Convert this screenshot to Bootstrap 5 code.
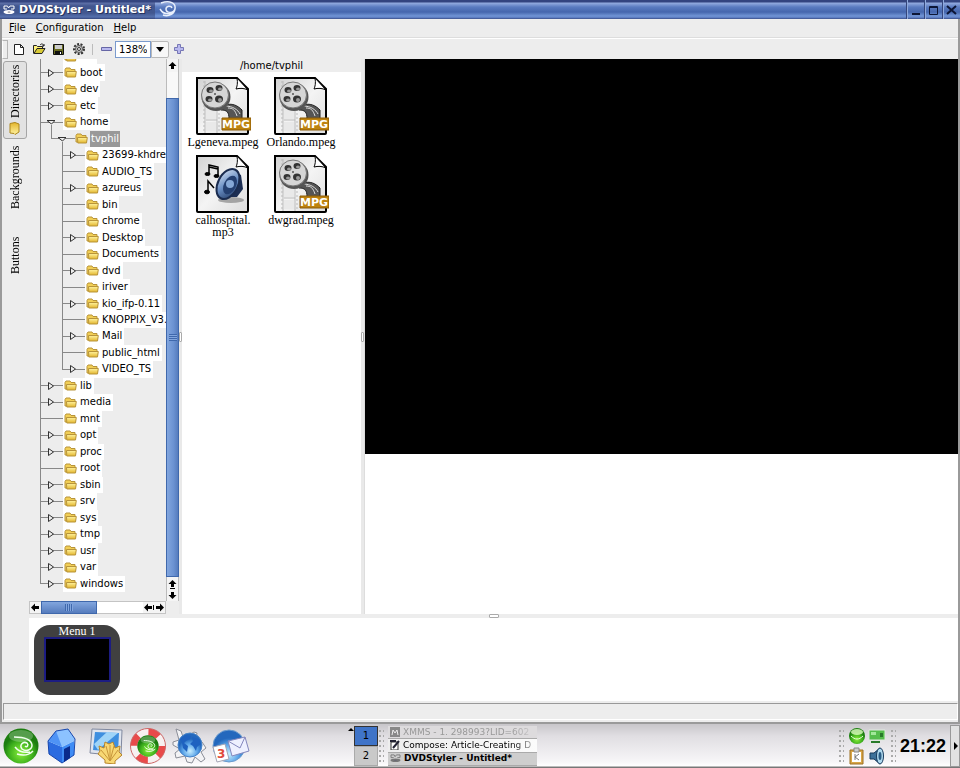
<!DOCTYPE html>
<html lang="en">
<head>
<meta charset="utf-8">
<meta name="viewport" content="width=device-width, initial-scale=1">
<title>DVDStyler - Untitled*</title>
<link href="https://cdn.jsdelivr.net/npm/bootstrap@5.3.0/dist/css/bootstrap.min.css" rel="stylesheet">
<style>
:root{--face:#ededed;--ui:"DejaVu Sans",Verdana,sans-serif;--book:"Liberation Serif","Times New Roman",serif}
body{font:10px/16px var(--ui);color:#000;background:var(--face)}
button,input{font:inherit;color:inherit}
button{background:none;border:0;padding:0;border-radius:0}
svg{display:block;flex:none}
.serif{font-family:var(--book);font-size:12px;line-height:12px}
.titlebar{height:19px;background:linear-gradient(#33447f 0,#33447f 2px,#93abdf 3px,#5a7bc0 7px,#4566ad 12px,#7195d6 16px,#5876bb 18px,#34467c 19px);color:#fff;font-size:11px;font-weight:700}
.title-text{width:155px;padding-left:3px;background:linear-gradient(#33447f 0,#33447f 2px,#5f71a8 3px,#42568f 6px,#41578f 13px,#5571ad 17px,#34467c 19px);text-shadow:1px 1px #25315c}
.win-btn{width:18px;height:19px;border-left:1px solid #34467c;box-shadow:inset 1px 0 #8ea9dd}
.frame{border:solid #9a9a9a;border-width:0 2px 2px}
.menus{height:19px;padding:1px 7px;gap:10px;border-bottom:1px solid #ddd}
.menus a{color:#000;text-decoration:none}
.tools{height:21px;padding-right:8px;border-top:1px solid #fff}
.tools button{width:20px;height:18px}
.grip{width:6px;height:19px;border:1px solid #b5b5b5;border-left-color:#fff;margin-right:2px}
.sep{width:1px;height:11px;background:#bcbcbc;margin:0 6px 0 2px}
.tools .zoom-out{width:16px}
.zoom-in{width:36px;height:17px;border:1px solid #7b9bcd;background:#fff;padding:0 3px}
.tools .zoom-drop{width:18px;height:17px;border:1px solid #b9b9b9;background:#f7f7f7;border-radius:0 2px 2px 0}
.side{width:27px;padding:2px 2px 0 1px}
.side button{width:24px;gap:4px}
.side .vert{writing-mode:vertical-rl;transform:rotate(180deg)}
.side .on{height:78px;border:1px solid #a5a5a5;border-radius:3px;background:#e2e2e2}
.side .backs{height:76px}.side .btns{height:80px}
.browser{width:150px}
.tree{overflow:hidden;padding:0 0 9px 11px}
.tree-list{margin-top:-11px}
.tree-row{flex:1 1 0;min-height:0;white-space:nowrap;line-height:16px}
.pipe,.branch{align-self:stretch;flex:none;background:linear-gradient(#888,#888) 0 0/1px 100% no-repeat}
.pipe{width:22px}.pipe.short{width:11px}
.branch{width:24px;background:linear-gradient(#888,#888) 0 0/1px 100% no-repeat,linear-gradient(#888,#888) 0 50%/100% 1px no-repeat;padding-left:7px}
.branch.last{background-size:1px 50%,100% 1px}
.node{background:#fff;padding:0 2px 0 1px;gap:3px;margin-left:-1px;align-self:stretch}
.node.sel{background:none;padding-right:0}
.node.sel span{background:#999;color:#fff;padding:0 1px;margin-left:-1px}
.vbar{width:13px;background:#f8f8f8;border:solid #bbb;border-width:0 1px}
.vbar button,.hbar button{background:#f4f4f4;flex:none}
.vthumb{background:linear-gradient(90deg,#82a6de,#6b92d2 60%,#567cbd);border:1px solid #3f68ac;margin:0 -1px}
.vgap{height:26px}
.hbar{height:13px;margin-right:13px;background:#fff;border:1px solid #c4c4c4}
.hthumb{width:56px;background:linear-gradient(#82a6de,#567cbd);border:1px solid #3f68ac;margin:-1px 0}
.hgrip,.vgrip{background:repeating-linear-gradient(90deg,#3f68ac 0 1px,#82a6de 1px 2px);width:8px;height:7px}
.vgrip{background:repeating-linear-gradient(#3f68ac 0 1px,#82a6de 1px 2px)}
.vsplit{width:3px;background:#e9e9e9}
.vsplit i{width:3px;height:10px;border:1px solid #aaa;background:#fff;border-radius:1px}
.hsplit{height:4px}
.hsplit i{width:10px;height:4px;border:1px solid #aaa;background:#fff;border-radius:1px}
.files{width:179px}
.path-head{height:13px;line-height:13px;background:var(--face)}
.thumbs{display:grid;grid-template-columns:78px 78px;grid-auto-rows:78px;padding:4px 2px}
.preview{border-left:1px solid #ddd}
.screen{aspect-ratio:3/2;background:#000}
.strip{height:83px;padding:7px 5px}
.menu-card{width:86px;height:70px;border-radius:16px;background:#404040;color:#fff}
.menu-screen{width:67px;height:45px;background:#000;border:2px solid #1c1c82}
.status{height:17px;margin:2px 0 2px 1px;border:1px solid;border-color:#999 #fff #fff #999}
.taskbar{height:44px;background:linear-gradient(#c8c6ca 0,#e0dee2 12px,#f7f6f8 38px,#fff 42px,#777 43px)}
.launch{gap:5px;padding-left:3px;width:348px}
.handle{width:6px;height:34px;background:radial-gradient(circle at 2px 2px,#aaa 1px,transparent 1px) 0 0/4px 5px}
.pager{width:24px;height:40px}
.pager button{flex:1;background:#c9c9c9;border:1px solid #aaa}
.pager .on{background:#3f74c8;border-color:#333}
.tasks{width:149px;height:40px;font-size:9px}
.tasks button{flex:1;line-height:13px;text-align:left;overflow:hidden;white-space:nowrap;background:linear-gradient(90deg,#eeeeee,#fbfbfb);border-bottom:1px solid #aaa;gap:3px;padding-left:2px}
.tasks .on{background:#cecece;font-weight:700}
.tasks .dim{color:#999;background:#dddbdd}
.fade-end{-webkit-mask-image:linear-gradient(90deg,#000 85%,#0005)}
.tray{display:grid;grid-template-columns:18px 18px;gap:2px}
.clock{font:700 18px/40px "Liberation Sans Narrow","Liberation Sans",Arial,sans-serif;width:50px}
.hide-btn{width:10px;height:42px;background:#e2e2e2;border:1px solid #999}
</style>
<script src="https://cdn.jsdelivr.net/npm/bootstrap@5.3.0/dist/js/bootstrap.bundle.min.js"></script>
</head>
<body class="vh-100 overflow-hidden d-flex flex-column">
<svg width="0" height="0" class="position-absolute" aria-hidden="true">
<defs>
<linearGradient id="gold" x2="0" y2="1"><stop stop-color="#fff3a0"/><stop offset="1" stop-color="#e3b52c"/></linearGradient>
<linearGradient id="page" x1="0" x2="1" y2="1"><stop stop-color="#d2d2d2"/><stop offset=".5" stop-color="#f4f4f4"/><stop offset="1" stop-color="#ddd"/></linearGradient>
<radialGradient id="lime" cy=".7"><stop stop-color="#8af03c"/><stop offset=".7" stop-color="#3cae1c"/><stop offset="1" stop-color="#1c7d10"/></radialGradient>
<radialGradient id="sky" cy=".75"><stop stop-color="#c9efff"/><stop offset=".6" stop-color="#5aa4e8"/><stop offset="1" stop-color="#2468bd"/></radialGradient>
<linearGradient id="steel" x2="1" y2="1"><stop stop-color="#dfe9f7"/><stop offset=".5" stop-color="#6a8fc4"/><stop offset="1" stop-color="#1d3560"/></linearGradient>
</defs>
<symbol id="folder" viewBox="0 0 13 11"><path d="M1 2.500 2 1h4l1 1.500h4V9H1z" fill="#f2cf55" stroke="#b8943a"/><path d="M2.500 4.500h9.800L11.500 10H2.800z" fill="url(#gold)" stroke="#b8943a"/></symbol>
<symbol id="shut" viewBox="0 0 8 16"><path d="M1.500 4.500v7l5-3.500z" fill="#ededed" stroke="#333"/></symbol>
<symbol id="open" viewBox="0 0 8 16"><path d="M0 6.500h8L4.500 10z" fill="#ededed" stroke="#333"/><path d="M4.500 11v5" stroke="#888"/></symbol>
<symbol id="dvd" viewBox="0 0 12 10"><path d="M1 1h3.500l1 2L7 1h4v3H8M1 1v3h3" fill="none" stroke="currentColor"/><ellipse cx="6" cy="7" rx="5.500" ry="2" fill="currentColor"/><ellipse cx="6" cy="7" rx="1.500" ry=".6" fill="#667"/></symbol>
<symbol id="sheet" viewBox="0 0 56 58"><path d="M2 1h40l11 11v44a1 1 0 0 1-1 1H3a1 1 0 0 1-1-1z" fill="url(#page)" stroke="#000" stroke-width="2"/><path d="M42 1c1 5 0 9-1 11 4-1 8-1 12 1z" fill="#fff" stroke="#000"/></symbol>
<symbol id="movie" viewBox="0 0 56 58"><use href="#sheet"/>
<g fill="none" stroke="#bbb"><path d="M10 4v52M22 30v26M11 30h11M11 43h11"/><path d="M9 4v52M24 32v24" stroke-dasharray="2 2"/></g><path d="M11 32h10v10H11zM11 45h10v9H11z" fill="#e9e9e9"/>
<path d="M30 28c7-2 12 0 17 5v9H34c0-7-2-9-8-9z" fill="#555" stroke="#222"/><path d="M33 31c5 0 7 2 9 8M30 29c8 0 13 4 15 8" fill="none" stroke="#ddd"/>
<ellipse cx="21" cy="20" rx="14.500" ry="14" fill="#555"/><ellipse cx="20" cy="18" rx="13.500" ry="13" fill="#d6d6d6" stroke="#777"/><g fill="#333"><ellipse cx="15" cy="13" rx="3.500" ry="3"/><ellipse cx="24" cy="11" rx="3.500" ry="3"/><ellipse cx="14" cy="22" rx="3.500" ry="3"/><ellipse cx="24" cy="22" rx="4" ry="3.500"/></g><g fill="#999"><ellipse cx="16" cy="14" rx="2" ry="1.500"/><ellipse cx="25" cy="12" rx="2" ry="1.500"/><ellipse cx="15" cy="23" rx="2" ry="1.500"/><ellipse cx="25" cy="23" rx="2" ry="2"/></g><circle cx="20" cy="17" r="1" fill="#555"/>
<path d="M27 41h29v12H27z" fill="#bd820f" stroke="#8a5a08"/><text x="41" y="51" text-anchor="middle" font-family="DejaVu Sans" font-weight="700" font-size="11" fill="#fff">MPG</text></symbol>
<symbol id="suse" viewBox="0 0 36 36"><circle cx="18" cy="18" r="17.500" fill="url(#lime)"/><ellipse cx="18" cy="8" rx="12" ry="6" fill="#fff" opacity=".25"/><path d="M11 9c8 0 17 2 18 8 0 5-6 7-10 4-3-4 1-8 5-6 2 2 0 5-2 3M12 19c3 4 8 6 15 5M14 26c6 2 12 1 16-3" fill="none" stroke="#f2fff0" stroke-width="1.500"/></symbol>
</svg>

<header class="titlebar d-flex">
<div class="title-text d-flex align-items-center"><svg width="12" height="10" class="me-1"><use href="#dvd"/></svg><span>DVDStyler - Untitled*</span></div>
<svg width="28" height="18" viewBox="0 0 28 18" fill="none" stroke="#e8effc" stroke-width="1.500"><path d="M6 3c9-3 15 0 14 6-2 5-9 4-9 0 0-3 5-4 6-1M5 9c3 5 8 6 14 3M8 15c6 2 11-1 12-6"/></svg>
<div class="ms-auto d-flex">
<button class="win-btn" aria-label="Minimize"><svg width="16" height="18"><path d="M5 13h8" stroke="#0d1636" stroke-width="2"/></svg></button>
<button class="win-btn" aria-label="Maximize"><svg width="16" height="18"><path d="M4.500 5.500h8v8h-8zM4 6.500h9" fill="none" stroke="#0d1636"/></svg></button>
<button class="win-btn" aria-label="Close"><svg width="16" height="18"><path d="m4 5 9 8m0-8-9 8" stroke="#0d1636" stroke-width="2"/></svg></button>
</div>
</header>

<main class="frame flex-grow-1 d-flex flex-column">
<nav class="menus d-flex" aria-label="Menu"><a href="#"><u>F</u>ile</a><a href="#"><u>C</u>onfiguration</a><a href="#"><u>H</u>elp</a></nav>
<div class="tools d-flex align-items-center">
<span class="grip"></span>
<button aria-label="New"><svg width="18" height="16" viewBox="0 0 18 16"><path d="M4.500 3.500h6l3 3v7h-9zM10.500 3.500v3h3" fill="#fff" stroke="#222"/></svg></button>
<button aria-label="Open"><svg width="18" height="16" viewBox="0 0 18 16"><path d="M3.500 12.500v-8h3l1 1h5v2" fill="#fff27a" stroke="#222"/><path d="m4 12.500 3-5h8l-3 5z" fill="#d8ca35" stroke="#222"/><path d="M10 4c2-2 3-1 4 1m0-2v2h-2" fill="none" stroke="#222"/></svg></button>
<button aria-label="Save"><svg width="18" height="16" viewBox="0 0 18 16"><path d="M3.500 3.500h10v10h-10z" fill="#686b1f" stroke="#111"/><path d="M5 4h7v4H5z" fill="#ccc"/><path d="M5 10h7v4H5z" fill="#111"/><path d="M10 11h1v2h-1z" fill="#fff"/></svg></button>
<button aria-label="Settings"><svg width="18" height="16" viewBox="0 0 18 16"><circle cx="9" cy="8" r="5" fill="#ddd" stroke="#333" stroke-width="2" stroke-dasharray="2 1.500"/><circle cx="9" cy="8" r="3.500" fill="#ccc" stroke="#555"/><circle cx="9" cy="8" r="1.500" fill="#fff" stroke="#333"/></svg></button>
<span class="sep"></span>
<button class="zoom-out" aria-label="Zoom out"><svg width="16" height="16" viewBox="0 0 16 16"><path d="M2.500 6.500h10v3h-10z" fill="#b8b8ee" stroke="#6666a5"/></svg></button>
<input class="zoom-in" type="text" value="138%" aria-label="Zoom">
<button class="zoom-drop" aria-label="Zoom levels"><svg width="16" height="15"><path d="M4 5h8l-4 5z"/></svg></button>
<button aria-label="Zoom in"><svg width="20" height="16" viewBox="0 0 20 16"><path d="M8.500 3.500h3v3h3v3h-3v3h-3v-3h-3v-3h3z" fill="#b8b8ee" stroke="#7777b5"/></svg></button>
</div>

<div class="flex-grow-1 d-flex">
<div class="side serif d-flex flex-column">
<button class="vert on d-flex align-items-center justify-content-center"><svg width="11" height="13" viewBox="0 0 11 13"><path d="M1 3 5 .500l1 1L10 2v9.500L5 12.500 1 11z" fill="url(#gold)" stroke="#ac861d"/></svg><span>Directories</span></button>
<button class="vert backs d-flex align-items-center justify-content-center">Backgrounds</button>
<button class="vert btns d-flex align-items-center justify-content-center">Buttons</button>
</div>
<div class="flex-grow-1 d-flex flex-column">
<div class="flex-grow-1 d-flex">
<section class="browser d-flex flex-column flex-shrink-0">
<div class="flex-grow-1 d-flex">
<div class="tree flex-grow-1 d-flex flex-column"><div id="tree" role="tree" aria-label="Directories" class="tree-list flex-grow-1 d-flex flex-column"></div></div>
<div class="vbar d-flex flex-column flex-shrink-0">
<button aria-label="Scroll up"><svg width="11" height="13"><path d="m5.500 3 4 4H7v3H4V7H1.500z"/></svg></button>
<div class="vgap"></div>
<div class="vthumb flex-grow-1 d-flex align-items-center justify-content-center"><i class="vgrip"></i></div>
<button aria-label="Scroll up one line"><svg width="11" height="12"><path d="m5.500 3 4 4H7v3H4V7H1.500zM3 11h5v1H3z"/></svg></button>
<button aria-label="Scroll down"><svg width="11" height="12"><path d="m5.500 10 4-4H7V3H4v3H1.500z"/></svg></button>
</div>
</div>
<div class="hbar d-flex">
<button aria-label="Scroll left"><svg width="11" height="11"><path d="m1 5.500 4-4V4h4v3H5v2.500z"/></svg></button>
<div class="hthumb d-flex align-items-center justify-content-center"><i class="hgrip"></i></div>
<button class="ms-auto" aria-label="Scroll left one column"><svg width="11" height="11"><path d="m1 5.500 4-4V4h4v3H5v2.500zM10 3h1v5h-1z"/></svg></button>
<button aria-label="Scroll right"><svg width="11" height="11"><path d="m10 5.500-4-4V4H2v3h4v2.500z"/></svg></button>
</div>
</section>
<div class="vsplit d-flex align-items-center"><i></i></div>
<section class="files bg-white flex-shrink-0">
<div class="path-head text-center">/home/tvphil</div>
<div class="thumbs serif">
<button class="d-flex flex-column align-items-center"><svg width="56" height="60" viewBox="0 0 56 58"><use href="#movie"/></svg><span>Lgeneva.mpeg</span></button>
<button class="d-flex flex-column align-items-center"><svg width="56" height="60" viewBox="0 0 56 58"><use href="#movie"/></svg><span>Orlando.mpeg</span></button>
<button class="d-flex flex-column align-items-center"><svg width="56" height="60" viewBox="0 0 56 58"><use href="#sheet"/><ellipse cx="36" cy="45" rx="13" ry="3" fill="#777" opacity=".6"/><path d="M30 42h12l6-8-2-14-10-6z" fill="#1d2f54"/><ellipse cx="33" cy="29" rx="10" ry="16" transform="rotate(27 33 29)" fill="url(#steel)" stroke="#1b2c4f" stroke-width="2"/><ellipse cx="35" cy="30" rx="6" ry="10" transform="rotate(27 35 30)" fill="#243f70"/><circle cx="35" cy="29" r="4" fill="#86a8d6"/><g stroke="#000" fill="#000"><path d="M14 19V10l9 2v9M14 12l9 2" fill="none" stroke-width="1.500"/><ellipse cx="12.500" cy="19" rx="2.500" ry="1.500"/><ellipse cx="21.500" cy="21" rx="2.500" ry="1.500"/><path d="M13 36V26l6 7" fill="none" stroke-width="1.500"/><ellipse cx="12" cy="37" rx="2.500" ry="1.800"/></g></svg><span>calhospital.<br>mp3</span></button>
<button class="d-flex flex-column align-items-center"><svg width="56" height="60" viewBox="0 0 56 58"><use href="#movie"/></svg><span>dwgrad.mpeg</span></button>
</div>
</section>
<div class="vsplit d-flex align-items-center"><i></i></div>
<section class="preview bg-white flex-grow-1"><div class="screen"></div></section>
</div>
<div class="hsplit d-flex justify-content-center"><i></i></div>
<section class="strip bg-white"><div class="menu-card serif d-flex flex-column align-items-center"><span>Menu 1</span><div class="menu-screen"></div></div></section>
</div>
</div>
<div class="status"></div>
</main>

<footer class="taskbar d-flex align-items-center">
<div class="launch d-flex">
<svg width="36" height="36"><use href="#suse"/></svg>
<svg width="36" height="36" viewBox="0 0 36 36"><path d="m4 13 14 6v16L5 26z" fill="#2b6be0"/><path d="m18 19 12-6v14l-12 8z" fill="#3f8cf5"/><path d="M4 13 12 3l12-2 7 10-1 2-12 6z" fill="#8cc2ff"/><path d="m4 13 8-10 6 16z" fill="#4f93f5"/><path d="M4 13 12 3l12-2 7 10-1 16-12 8-13-9z" fill="none" stroke="#1746ad"/><path d="m20 21 6-3v12l-6 4z" fill="#0a2a8c"/></svg>
<svg width="36" height="36" viewBox="0 0 36 36" class="ms-1"><path d="m3 1 30 1-1 26-31-3z" fill="#dfe4ee" stroke="#8089a0"/><path d="m6 4 24 1-1 19-25-2z" fill="#3f8fdf"/><path d="m5 16 13-12 11 1-20 17z" fill="#9fd4f8"/><path d="M16 35v-3l-7-6 2-3-1-5 5 2 1-6 4 2 4-2 2 6 5-2-1 6 3 3-7 6v3z" fill="#f8d874" stroke="#b8852a"/><path d="m21 33-9-11m9 11-4-15m4 15V17m0 16 4-15m-4 15 8-11" stroke="#c8963a" fill="none"/></svg>
<svg width="36" height="36" viewBox="0 0 36 36"><circle cx="18" cy="18" r="14" fill="none" stroke="#f7f0f0" stroke-width="7"/><circle cx="18" cy="18" r="14" fill="none" stroke="#e84a4a" stroke-width="7" stroke-dasharray="11 11"/><circle cx="18" cy="18" r="17.500" fill="none" stroke="#c66"/><svg x="7" y="7" width="22" height="22"><use href="#suse"/></svg></svg>
<svg width="36" height="36" viewBox="0 0 36 36"><path d="m5 1 5 2 2 6 6-2 5-3 3 1-1 6 6 3 4 6-5 4 4 7-4 3-6-5-3 6-5-1-2-6-9 2-1-5 5-4-7-4V14l6-2z" fill="#f3f3f5" stroke="#8b8e98"/><circle cx="19" cy="17" r="12" fill="url(#sky)" stroke="#4784c9"/><path d="m9 11 6-4 5 1-1 3-4 2-2 2 4 3-1 6-4-4-1-5zm12-2 7 2 2 5-4 3-1 4-3-5-3-2 3-3z" fill="#1f62c0"/></svg>
<svg width="38" height="36" viewBox="0 0 38 36"><circle cx="17" cy="18" r="16" fill="url(#sky)" stroke="#6b9bce"/><path d="m16 13 17-4 4 14-17 5z" fill="#eef0ff" stroke="#8487bd"/><path d="m16 13 12 7 5-11" fill="none" stroke="#8487bd"/><path d="m1 19 12-3 4 15-12 3z" fill="#fff" stroke="#a5a5b5"/><text x="5" y="30" font-family="DejaVu Sans" font-weight="700" font-size="12" fill="#e04b3b">3</text></svg>
</div>
<svg width="6" height="42"><path d="M0 6h6L3 3z"/></svg>
<div class="pager d-flex flex-column"><button class="on">1</button><button>2</button></div>
<div class="handle mx-0"></div>
<div class="tasks ms-1 d-flex flex-column">
<button class="dim d-flex align-items-center"><svg width="10" height="10" viewBox="0 0 10 10"><path d="M0 0h10v10H0z" fill="#888"/><path d="m2 8 1-5 2 3 2-3 1 5" fill="none" stroke="#eee"/></svg><span class="fade-end">XMMS - 1. 298993?LID=602</span></button>
<button class="d-flex align-items-center"><svg width="10" height="10" viewBox="0 0 10 10"><path d="M1 2h7v8H1z" fill="#fff" stroke="#333"/><path d="m3 8 6-7M0 1h6" stroke="#223" stroke-width="2"/></svg><span class="fade-end">Compose: Article-Creating D</span></button>
<button class="on d-flex align-items-center"><svg width="11" height="9"><use href="#dvd" color="#777"/></svg>DVDStyler - Untitled*</button>
</div>
<div class="ms-auto d-flex align-items-center">
<div class="handle me-1"></div>
<div class="tray">
<svg width="18" height="18" viewBox="0 0 18 18"><circle cx="9" cy="9" r="8" fill="url(#lime)"/><ellipse cx="9" cy="5" rx="6" ry="3" fill="#dfffc0" opacity=".8"/><path d="M3 9c4 4 8 4 12 0" stroke="#e9ffdc" fill="none"/></svg>
<svg width="18" height="18" viewBox="0 0 18 18"><path d="M1 3h16v10H1z" fill="#55bd4c" stroke="#dfe9df"/><path d="M3 5h5v3H3z" fill="#a2e89a"/><path d="M12 6h3v4h-3zM3 14h9v2H3z" fill="#287a2a"/></svg>
<svg width="18" height="18" viewBox="0 0 18 18"><path d="M2 3h13v14H2z" fill="#d9a648" stroke="#9d7022"/><path d="M4 5h9v10H4z" fill="#fff"/><path d="M6 1h5v4H6z" fill="#ccc" stroke="#888"/><path d="M7 7v6m4-6-4 3 4 3" fill="none" stroke="#777"/></svg>
<svg width="18" height="18" viewBox="0 0 18 18"><path d="M2 6h4l6-5v16l-6-5H2z" fill="#3d7099" stroke="#173a5c"/><ellipse cx="12" cy="9" rx="3.500" ry="8" fill="#aed8ee" stroke="#173a5c"/><ellipse cx="12" cy="9" rx="1.500" ry="4" fill="#2a5c85"/></svg>
</div>
<div class="handle mx-1"></div>
<time class="clock">21:22</time>
<button class="hide-btn d-flex align-items-center" aria-label="Hide panel"><svg width="8" height="10"><path d="M3 1v8l4-4z"/></svg></button>
</div>
</footer>

<script>
// Each entry: depth, name, state ("+" closed, "-" open, "" no children)
const folders = [
  [1,"bin",""],[1,"boot","+"],[1,"dev","+"],[1,"etc","+"],[1,"home","-"],[2,"tvphil","-"],
  [3,"23699-khdrec","+"],[3,"AUDIO_TS",""],[3,"azureus","+"],[3,"bin",""],[3,"chrome",""],
  [3,"Desktop","+"],[3,"Documents",""],[3,"dvd","+"],[3,"iriver",""],[3,"kio_ifp-0.11","+"],
  [3,"KNOPPIX_V3.",""],[3,"Mail","+"],[3,"public_html",""],[3,"VIDEO_TS","+"],
  [1,"lib","+"],[1,"media","+"],[1,"mnt",""],[1,"opt","+"],[1,"proc","+"],[1,"root",""],
  [1,"sbin","+"],[1,"srv","+"],[1,"sys","+"],[1,"tmp","+"],[1,"usr","+"],[1,"var","+"],[1,"windows","+"]
];
const pipes = {1:"", 2:'<span class="pipe short"></span>', 3:'<span class="pipe"></span>'};
const arrows = {"+":"shut", "-":"open"};
document.getElementById("tree").innerHTML = folders.map(([depth, name, state], i) => {
  const next = folders[i + 1];
  const last = depth === 2 || !next || next[0] < depth;
  const arrow = state ? `<svg width="8" height="16"><use href="#${arrows[state]}"/></svg>` : "";
  return `<div class="tree-row d-flex align-items-center" role="treeitem" aria-level="${depth}">${pipes[depth]}` +
    `<span class="branch d-flex align-items-center ${last ? "last" : ""}">${arrow}</span>` +
    `<span class="node d-flex align-items-center ${depth === 2 ? "sel" : ""}"><svg width="13" height="11"><use href="#folder"/></svg><span>${name}</span></span></div>`;
}).join("");
</script>
</body>
</html>
